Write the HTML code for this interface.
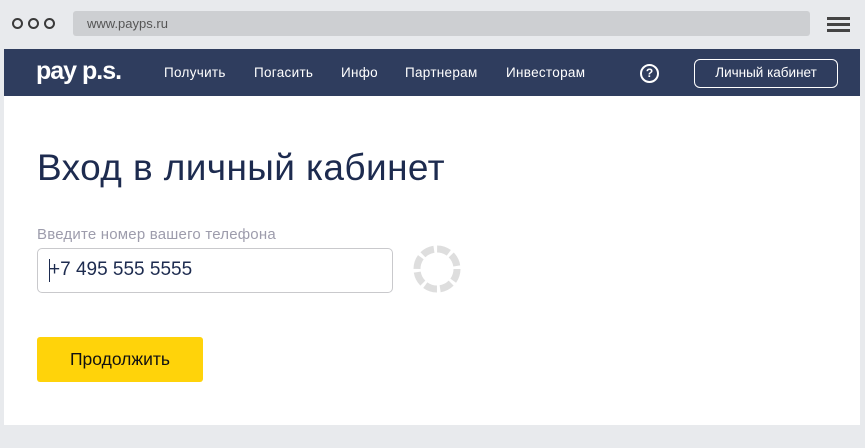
<!DOCTYPE html>
<html><head><meta charset="utf-8"><style>
*{margin:0;padding:0;box-sizing:border-box}
body{width:865px;height:448px;background:#e8eaed;font-family:"Liberation Sans","DejaVu Sans",sans-serif;position:relative;overflow:hidden}
.a{position:absolute}
.dot{width:11px;height:11px;border:2px solid #3a3a3a;border-radius:50%;top:18px}
.addr{left:73px;top:11px;width:737px;height:25px;background:#cdcfd2;border-radius:3px;color:#555;font-size:13px;line-height:25px;padding-left:14px}
.hb{left:827px;width:23px;height:3px;background:#444}
.nav{left:4px;top:49px;width:856px;height:47px;background:#2f3d5e}
.nl{color:#fff;font-size:13.5px;top:65px;letter-spacing:0.3px}
.main{left:4px;top:96px;width:856px;height:329px;background:#fff}
</style></head><body>
<div class="a dot" style="left:12px"></div>
<div class="a dot" style="left:28px"></div>
<div class="a dot" style="left:44px"></div>
<div class="a addr">www.payps.ru</div>
<div class="a hb" style="top:17px"></div>
<div class="a hb" style="top:23px"></div>
<div class="a hb" style="top:29px"></div>
<div class="a nav"></div>
<div class="a" style="left:36px;top:57px;color:#fff;font-size:25px;font-weight:bold;letter-spacing:-1px">pay p.s.</div>
<div class="a nl" style="left:164px">Получить</div>
<div class="a nl" style="left:254px">Погасить</div>
<div class="a nl" style="left:341px">Инфо</div>
<div class="a nl" style="left:405px">Партнерам</div>
<div class="a nl" style="left:506px">Инвесторам</div>
<div class="a" style="left:640px;top:64px;width:19px;height:19px;border:2px solid #fff;border-radius:50%;color:#fff;font-size:12px;font-weight:bold;text-align:center;line-height:15px">?</div>
<div class="a" style="left:694px;top:59px;width:144px;height:29px;border:1.5px solid #fff;border-radius:6px;color:#fff;font-size:13.5px;text-align:center;line-height:26px">Личный кабинет</div>
<div class="a main"></div>
<div class="a" style="left:37px;top:147px;font-size:37px;color:#1d2b4f;letter-spacing:0.4px">Вход в личный кабинет</div>
<div class="a" style="left:37px;top:226px;font-size:15px;color:#9d9cac;letter-spacing:0.2px">Введите номер вашего телефона</div>
<div class="a" style="left:37px;top:248px;width:356px;height:45px;border:1px solid #c9c9cc;border-radius:5px"></div>
<div class="a" style="left:49px;top:259px;width:1px;height:23px;background:#1d2b4f"></div>
<div class="a" style="left:49px;top:259px;font-size:19px;color:#1d2b4f">+7 495 555 5555</div>
<svg class="a" style="left:412px;top:244px" width="50" height="50" viewBox="0 0 50 50">
<circle cx="25" cy="25" r="20" fill="none" stroke="#dedede" stroke-width="7" stroke-dasharray="12.5 3.2"/>
</svg>
<div class="a" style="left:37px;top:337px;width:166px;height:45px;background:#ffd30a;border-radius:3px;font-size:17.5px;color:#111;text-align:center;line-height:45px">Продолжить</div>
</body></html>
